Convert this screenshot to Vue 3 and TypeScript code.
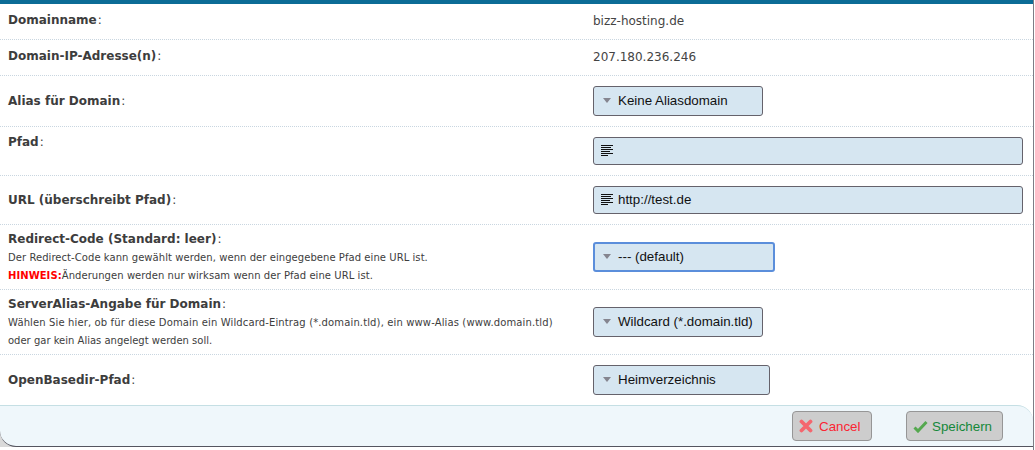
<script setup lang="ts">
interface Row { label: string; notes?: string[]; hint?: string; value?: string; kind: string; text?: string; width?: number; cls: string }
const rows: Row[] = [
  { label: 'Domainname', value: 'bizz-hosting.de', kind: 'value', cls: 'h36' },
  { label: 'Domain-IP-Adresse(n)', value: '207.180.236.246', kind: 'value', cls: 'h36' },
  { label: 'Alias für Domain', kind: 'select', text: 'Keine Aliasdomain', width: 170, cls: 'h51' },
  { label: 'Pfad', kind: 'input', text: '', cls: 'h49 top' },
  { label: 'URL (überschreibt Pfad)', kind: 'input', text: 'http://test.de', cls: 'h49' },
  { label: 'Redirect-Code (Standard: leer)', hint: 'Änderungen werden nur wirksam wenn der Pfad eine URL ist.', notes: ['Der Redirect-Code kann gewählt werden, wenn der eingegebene Pfad eine URL ist.'], kind: 'select focus', text: '--- (default)', width: 182, cls: 'h65' },
  { label: 'ServerAlias-Angabe für Domain', notes: ['Wählen Sie hier, ob für diese Domain ein Wildcard-Eintrag (*.domain.tld), ein www-Alias (www.domain.tld)', 'oder gar kein Alias angelegt werden soll.'], kind: 'select', text: 'Wildcard (*.domain.tld)', width: 170, cls: 'h65 wide' },
  { label: 'OpenBasedir-Pfad', kind: 'select', text: 'Heimverzeichnis', width: 177, cls: 'h50 last' },
]
</script>

<template>
  <div class="page">
    <div class="topbar"></div>
    <div class="form">
      <div v-for="r in rows" :key="r.label" class="row" :class="r.cls">
        <div class="labelcol">
          <div class="label">{{ r.label }}<span class="colon">:</span></div>
          <div v-for="n in r.notes" :key="n" class="note">{{ n }}</div>
          <div v-if="r.hint" class="note"><b class="hint">HINWEIS:</b>{{ r.hint }}</div>
        </div>
        <div class="field">
          <span v-if="r.kind === 'value'" class="value">{{ r.value }}</span>
          <div v-else-if="r.kind === 'input'" class="ctl input">
            <svg width="12" height="12" viewBox="0 0 12 12" class="ico"><path d="M0 .5h12M0 2.5h10M0 4.5h12M0 6.5h9M0 8.5h12M0 10.5h7" stroke="#111" stroke-width="1" fill="none" /></svg>
            <span>{{ r.text }}</span>
          </div>
          <div v-else class="ctl sel" :class="{ focus: r.kind.includes('focus') }" :style="{ width: r.width + 'px' }">
            <svg width="8" height="5" viewBox="0 0 8 5" class="arrow"><path d="M0 0h8L4 5z" fill="#85858f" /></svg>
            <span>{{ r.text }}</span>
          </div>
        </div>
      </div>
    </div>
    <div class="footwrap">
      <div class="footer">
        <div class="btn cancel">
          <svg width="14" height="14" viewBox="0 0 14 14"><path d="M2.5 2.5l9 9M11.5 2.5l-9 9" stroke="#f4666e" stroke-width="3.8" stroke-linecap="round" /></svg>
          <span>Cancel</span>
        </div>
        <div class="btn save">
          <svg width="15" height="13" viewBox="0 0 15 13"><path d="M1.5 7.5l3.5 3.5L13.5 2" stroke="#55a84f" stroke-width="3" fill="none" /></svg>
          <span>Speichern</span>
        </div>
      </div>
    </div>
  </div>
</template>

<style>
html, body { margin: 0; background: #fff; }
</style>

<style scoped>
.page {
  width: 1034px;
  height: 450px;
  box-sizing: border-box;
  overflow: hidden;
  background: #fff;
  border-right: 1px solid #7d7d86;
  font-family: "DejaVu Sans", sans-serif;
  color: #3a3a3a;
}
.topbar { height: 4px; background: #0c6c96; }
.row {
  display: grid;
  grid-template-columns: 593px 430px;
  align-items: center;
  box-sizing: border-box;
  border-bottom: 1px dotted #c9d6e0;
}
.h36 { height: 36px; padding-bottom: 3px; }
.h36 .field { padding-bottom: 1px; }
.h51 { height: 51px; }
.h49 { height: 49px; }
.h65 { height: 65px; padding-top: 1px; }
.h65 .label { margin-bottom: 1px; }
.h65 .field { margin-top: -1px; }
.h50 { height: 50px; border-bottom: none; }
.top { align-items: start; }
.top .labelcol { padding-top: 6px; }
.top .field { padding-top: 10px; }
.labelcol { padding-left: 8px; }
.label { font-size: 12px; font-weight: 700; line-height: 18px; color: #3d3d3d; }
.colon { font-weight: 400; margin-left: 1px; }
.note { font-size: 10px; line-height: 18px; color: #3d3d3d; white-space: nowrap; letter-spacing: 0.06px; }
.wide .note:nth-child(2) { letter-spacing: 0.13px; }
.wide .note:nth-child(3) { letter-spacing: 0; }
.hint { color: #f00; }
.value { font-size: 12px; color: #444; }
.ctl {
  box-sizing: border-box;
  display: flex;
  align-items: center;
  background: #d6e6f1;
  border: 1px solid #65626b;
  border-radius: 3px;
  padding-bottom: 1px;
  font-family: "Liberation Sans", sans-serif;
  font-size: 13.33px;
  color: #111;
}
.input { width: 430px; height: 28px; }
.sel { height: 30px; }
.sel.focus { border: 2px solid #5b8edb; }
.sel.focus .arrow { margin-left: 8px; }
.ico { margin-left: 7px; margin-right: 5px; }
.arrow { margin-left: 9px; margin-right: 7px; }
.footwrap { background: linear-gradient(to right, #d9d9d9 16px, #fff 16px); }
.footer {
  box-sizing: border-box;
  height: 42px;
  background: #eff7fb;
  border-top: 1px solid #c5dfe4;
  border-bottom: 1px solid #55555f;
  border-radius: 0 16px 0 16px;
  display: flex;
  justify-content: flex-end;
  align-items: center;
  gap: 34px;
  padding-right: 30px;
}
.btn {
  box-sizing: border-box;
  height: 30px;
  display: flex;
  align-items: center;
  background: #cdcdcd;
  border: 1px solid #969696;
  border-radius: 4px;
  font-family: "Liberation Sans", sans-serif;
  font-size: 13.33px;
  padding-left: 6px;
}
.cancel { width: 80px; color: #fb2433; gap: 6px; }
.save { width: 97px; color: #15883a; gap: 4px; }
</style>
